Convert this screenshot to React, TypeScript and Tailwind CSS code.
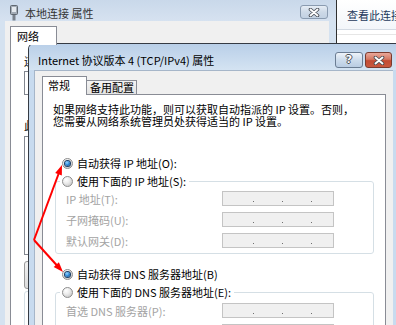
import React from "react";

function Radio({ checked }: { checked?: boolean }) {
  return (
    <span className="flex h-[11px] w-[11px] shrink-0 items-center justify-center rounded-full border border-[#8d8d8d] bg-[radial-gradient(circle_at_35%_30%,#ffffff_0%,#ececec_40%,#bcbcbc_100%)]">
      {checked ? (
        <span className="h-[5px] w-[5px] rounded-full bg-[radial-gradient(circle_at_40%_35%,#9ad8ff_0%,#2a86d4_50%,#0a3a78_100%)] ring-1 ring-[#1c3f66]" />
      ) : null}
    </span>
  );
}

function XGlyph({ w = 12, h = 9 }: { w?: number; h?: number }) {
  return (
    <svg width={w} height={h} viewBox="0 0 12 9">
      <path d="M2.5 1.5 L9.5 7.5 M9.5 1.5 L2.5 7.5" stroke="#4a4f57" strokeWidth="3.6" strokeLinecap="round" />
      <path d="M2.5 1.5 L9.5 7.5 M9.5 1.5 L2.5 7.5" stroke="#ffffff" strokeWidth="1.9" strokeLinecap="round" />
    </svg>
  );
}

function FieldRow({ label }: { label: string }) {
  return (
    <div className="flex h-[15px] items-center pl-[6px]">
      <span className="w-[156px] whitespace-nowrap leading-[12px] text-[#a3a3a3]">{label}</span>
      <div className="flex h-[15px] w-[112px] items-end gap-[28px] border border-[#c4c4c4] bg-[#f0f0f0] pb-[3px] pl-[30px]">
        <span className="h-px w-px bg-[#6f6f6f]" />
        <span className="h-px w-px bg-[#6f6f6f]" />
        <span className="h-px w-px bg-[#6f6f6f]" />
      </div>
    </div>
  );
}

export default function App() {
  return (
    <div className="relative h-[325px] w-[396px] overflow-hidden bg-[#f0f0f0] font-['Noto_Sans_CJK_SC',sans-serif] text-[11px] text-black">
      {/* Background window: 本地连接 属性 */}
      <div className="absolute left-0 top-0 flex h-[325px] w-[336px] flex-col bg-[#d5e2f0]">
        <div className="flex h-[22px] items-start bg-[linear-gradient(to_bottom,#c9d8ea,#d6e2f0)]">
          <svg className="ml-[10px] mt-[5px]" width="8" height="16" viewBox="0 0 8 16">
            <rect x="0.5" y="0.5" width="7" height="9" rx="1" fill="#a3acb6" stroke="#5f6770" />
            <rect x="2" y="2" width="4" height="5" fill="#e4e9ee" />
            <rect x="2.5" y="10" width="3" height="5.5" fill="#79818b" />
          </svg>
          <span className="ml-[7px] mt-[7px] whitespace-nowrap leading-[12px] text-[#333]">本地连接 属性</span>
          <div className="ml-auto mr-[8px] mt-[5px] flex h-[14px] w-[28px] items-center justify-center rounded-[3px] border border-[#8a9bb0] bg-[linear-gradient(to_bottom,#e6edf5,#cdd9e7_50%,#c2d1e2)]">
            <XGlyph />
          </div>
        </div>
        <div className="ml-[5px] mr-[7px] flex flex-1 flex-col bg-[#f0f0f0] pl-[5px] pt-[5px]">
          <div className="relative z-10 -mb-px h-[19px] w-[47px] border-x border-t border-[#898c95] bg-white pl-[6px] pt-[3px] leading-[12px]">
            网络
          </div>
          <div className="flex flex-1 flex-col border border-[#898c95] bg-white pl-[13px]">
            <span className="mt-[10px] whitespace-nowrap leading-[12px]">连接时使用:</span>
            <div className="mt-[4px] h-[24px] w-[280px] border border-[#828790] bg-white" />
            <span className="mt-[24px] whitespace-nowrap leading-[12px]">此连接使用下列项目(O):</span>
            <div className="mt-[5px] h-[119px] w-[280px] border border-[#828790] bg-white" />
            <div className="mt-[6px] h-[28px] w-[70px] rounded-[3px] border border-[#9a9a9a] bg-[linear-gradient(to_bottom,#f2f2f2,#dcdcdc)]" />
            <div className="mt-[2px] h-[100px] w-[290px] rounded-[3px] border border-[#d5dfe5]" />
          </div>
        </div>
      </div>

      {/* Right window behind */}
      <div className="absolute left-[336px] top-0 h-[43px] w-[60px] border-l border-[#2f2f2f] bg-white">
        <div className="h-[30px] border-b border-[#d3dae3] bg-[linear-gradient(to_bottom,#ffffff,#f3f6fa)] pl-[10px] pt-[9px] whitespace-nowrap leading-[12px] text-[#1e395b]">
          查看此连接
        </div>
        <div className="mt-[4px] border-t border-[#e6e6e6]" />
      </div>

      {/* Front dialog: Internet 协议版本 4 (TCP/IPv4) 属性 */}
      <div className="absolute left-[28px] top-[43px] flex h-[290px] w-[370px] flex-col overflow-hidden rounded-tl-[6px] border-l border-t border-[#353b44] bg-[#c8dbef]">
        <div className="flex h-[26px] shrink-0 items-start bg-[linear-gradient(to_bottom,#b9cfe8,#c9dbee_60%,#d4e3f2)]">
          <span className="ml-[9px] pt-[10px] whitespace-nowrap leading-[12px]">Internet 协议版本 4 (TCP/IPv4) 属性</span>
          <div className="ml-auto mr-[6px] mt-[8px] flex gap-[2px]">
            <div className="flex h-[16px] w-[28px] items-center justify-center rounded-[3px] border border-[#6b7d93] bg-[linear-gradient(to_bottom,#eef3f9,#cddcec_50%,#b9cce2)]">
              <span className="font-['DejaVu_Sans',sans-serif] text-[11px] font-bold leading-[12px] text-white [text-shadow:-1px_0_#4a4f57,1px_0_#4a4f57,0_-1px_#4a4f57,0_1px_#4a4f57]">
                ?
              </span>
            </div>
            <div className="flex h-[16px] w-[27px] items-center justify-center rounded-[3px] border border-[#7a3a2e] bg-[linear-gradient(to_bottom,#e9a89a,#d47762_45%,#c24a33_55%,#c8583f)]">
              <XGlyph />
            </div>
          </div>
        </div>
        <div className="ml-[5px] mr-[5px] flex flex-1 flex-col border-l border-t border-[#a6b6c9] bg-[#f0f0f0] pl-[7px] pt-[5px]">
          <div className="relative z-10 -mb-px flex h-[19px] items-start">
            <div className="h-[19px] w-[45px] border-x border-t border-[#898c95] bg-white pl-[5px] pt-[2px] leading-[12px]">
              常规
            </div>
            <div className="mt-[4px] h-[14px] w-[50px] border-r border-t border-[#898c95] bg-[linear-gradient(to_bottom,#f4f4f4,#e3e3e3)] pl-[3px] leading-[12px]">
              备用配置
            </div>
          </div>
          <div className="flex w-[344px] flex-1 flex-col border border-[#898c95] bg-white">
            <p className="whitespace-nowrap pl-[10px] pt-[8px] leading-[12px]">
              如果网络支持此功能，则可以获取自动指派的 IP 设置。否则，
              <br />
              您需要从网络系统管理员处获得适当的 IP 设置。
            </p>

            <div className="ml-[19px] mt-[29px] flex h-[14px] items-center gap-[4px]">
              <Radio checked />
              <span className="whitespace-nowrap leading-[12px]">自动获得 IP 地址(O):</span>
            </div>

            <fieldset className="ml-[12px] mt-[4px] w-[319px] rounded-[3px] border border-[#d5dfe5] pb-[5px] pl-[4px]">
              <legend className="pl-[2px] pr-[3px]">
                <div className="flex h-[14px] items-center gap-[4px]">
                  <Radio />
                  <span className="whitespace-nowrap leading-[12px]">使用下面的 IP 地址(S):</span>
                </div>
              </legend>
              <div className="flex flex-col gap-[6px] pt-[3px]">
                <FieldRow label="IP 地址(T):" />
                <FieldRow label="子网掩码(U):" />
                <FieldRow label="默认网关(D):" />
              </div>
            </fieldset>

            <div className="ml-[19px] mt-[13px] flex h-[14px] items-center gap-[4px]">
              <Radio checked />
              <span className="whitespace-nowrap leading-[12px]">自动获得 DNS 服务器地址(B)</span>
            </div>

            <fieldset className="ml-[12px] mt-[4px] w-[319px] rounded-[3px] border border-[#d5dfe5] pb-[5px] pl-[4px]">
              <legend className="pl-[2px] pr-[3px]">
                <div className="flex h-[14px] items-center gap-[4px]">
                  <Radio />
                  <span className="whitespace-nowrap leading-[12px]">使用下面的 DNS 服务器地址(E):</span>
                </div>
              </legend>
              <div className="flex flex-col gap-[6px] pt-[4px]">
                <FieldRow label="首选 DNS 服务器(P):" />
                <FieldRow label="备用 DNS 服务器(A):" />
              </div>
            </fieldset>
          </div>
        </div>
      </div>

      {/* Red annotation arrows */}
      <svg className="pointer-events-none absolute left-0 top-0" width="396" height="325" viewBox="0 0 396 325">
        <path d="M34 240 L58.5 174" stroke="#ff0000" strokeWidth="2" fill="none" />
        <polygon points="62,165 61.8,175.6 55.2,173.1" fill="#ff0000" />
        <path d="M34 240 L57 265.5" stroke="#ff0000" strokeWidth="2" fill="none" />
        <polygon points="63,272 58.9,262.2 53.7,266.9" fill="#ff0000" />
      </svg>
    </div>
  );
}
